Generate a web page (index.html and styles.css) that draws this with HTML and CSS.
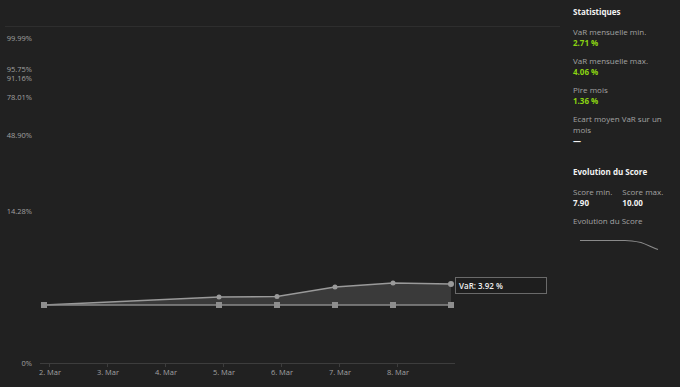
FILE: index.html
```html
<!DOCTYPE html>
<html lang="fr">
<head>
<meta charset="utf-8">
<link rel="stylesheet" href="styles.css">
</head>
<body>
<div class="page">
  <div class="chart">
    <svg class="chart-svg" width="560" height="387" viewBox="0 0 560 387">
      <line x1="5" y1="26.5" x2="560" y2="26.5" stroke="#2e2e2e" stroke-width="1"/>
      <g class="ylab" text-anchor="end">
        <text x="32" y="41">99.99%</text>
        <text x="32" y="72">95.75%</text>
        <text x="32" y="81">91.16%</text>
        <text x="32" y="100">78.01%</text>
        <text x="32" y="138">48.90%</text>
        <text x="32" y="214">14.28%</text>
        <text x="32" y="366">0%</text>
      </g>
      <line x1="40" y1="363.5" x2="455" y2="363.5" stroke="#3d3d3d"/>
      <g stroke="#3d3d3d">
        <line x1="49.5" y1="363" x2="49.5" y2="367"/>
        <line x1="107.5" y1="363" x2="107.5" y2="367"/>
        <line x1="165.5" y1="363" x2="165.5" y2="367"/>
        <line x1="223.5" y1="363" x2="223.5" y2="367"/>
        <line x1="281.5" y1="363" x2="281.5" y2="367"/>
        <line x1="339.5" y1="363" x2="339.5" y2="367"/>
        <line x1="397.5" y1="363" x2="397.5" y2="367"/>
      </g>
      <g class="xlab" text-anchor="middle">
        <text x="50" y="375">2. Mar</text>
        <text x="108" y="375">3. Mar</text>
        <text x="166" y="375">4. Mar</text>
        <text x="224" y="375">5. Mar</text>
        <text x="282" y="375">6. Mar</text>
        <text x="340" y="375">7. Mar</text>
        <text x="398" y="375">8. Mar</text>
      </g>
      <polygon points="44,305 219,297 277,296.5 335,287 393,283 451,284 451,305" fill="#3a3a3a"/>
      <polyline points="44,305 219,297 277,296.5 335,287 393,283 451,284" fill="none" stroke="#9a9a9a" stroke-width="1.5"/>
      <line x1="44" y1="305" x2="451" y2="305" stroke="#8a8a8a" stroke-width="1.5"/>
      <g fill="#9a9a9a">
        <circle cx="219" cy="297" r="2.5"/>
        <circle cx="277" cy="296.5" r="2.5"/>
        <circle cx="335" cy="287" r="2.5"/>
        <circle cx="393" cy="283" r="2.5"/>
        <circle cx="451" cy="284" r="3"/>
      </g>
      <g fill="#8e8e8e">
        <rect x="41" y="302" width="6" height="6"/>
        <rect x="216" y="302" width="6" height="6"/>
        <rect x="274" y="302" width="6" height="6"/>
        <rect x="332" y="302" width="6" height="6"/>
        <rect x="390" y="302" width="6" height="6"/>
        <rect x="448" y="302" width="6" height="6"/>
      </g>
    </svg>
    <div class="tooltip">VaR: 3.92 %</div>
  </div>
  <aside class="side">
    <h2 class="title">Statistiques</h2>
    <div class="stat">
      <div class="label">VaR mensuelle min.</div>
      <div class="value green">2.71 %</div>
    </div>
    <div class="stat">
      <div class="label">VaR mensuelle max.</div>
      <div class="value green">4.06 %</div>
    </div>
    <div class="stat">
      <div class="label">Pire mois</div>
      <div class="value green">1.36 %</div>
    </div>
    <div class="stat">
      <div class="label">Ecart moyen VaR sur un mois</div>
      <div class="value white">—</div>
    </div>
    <h2 class="title title-2">Evolution du Score</h2>
    <div class="scores">
      <div class="score">
        <div class="label">Score min.</div>
        <div class="value white">7.90</div>
      </div>
      <div class="score">
        <div class="label">Score max.</div>
        <div class="value white">10.00</div>
      </div>
    </div>
    <div class="label spark-label">Evolution du Score</div>
    <svg class="spark" width="90" height="14" viewBox="0 0 90 14">
      <path d="M7 3.5 L52 3.5 C58 3.5 63 4.5 68 5.5 C74 7.5 79 10.5 85 12.5" fill="none" stroke="#8a8a8a" stroke-width="1.2"/>
    </svg>
  </aside>
</div>
</body>
</html>
```

FILE: styles.css
```css
html, body {
  margin: 0;
  padding: 0;
  background: #212121;
}
body {
  width: 680px;
  height: 387px;
  overflow: hidden;
  font-family: "Open Sans", "Noto Sans", sans-serif;
}
.page {
  display: flex;
  height: 387px;
}
.chart {
  position: relative;
  width: 560px;
  flex: none;
}
.chart-svg {
  display: block;
}
.ylab text, .xlab text {
  font-family: "Open Sans", sans-serif;
  font-size: 7.5px;
  fill: #a0a0a0;
}
.tooltip {
  position: absolute;
  left: 455px;
  top: 277px;
  width: 87px;
  height: 15px;
  border: 1px solid #6a6a6a;
  background: #1e1e1e;
  color: #f0f0f0;
  font-size: 8px;
  font-weight: 600;
  line-height: 15px;
  padding-left: 3px;
  box-sizing: content-box;
}
.side {
  padding: 6px 0 0 13px;
  flex: 1;
  display: flex;
  flex-direction: column;
  align-items: flex-start;
}
.title {
  margin: 0 0 8px;
  font-size: 8px;
  font-weight: 700;
  color: #f2f2f2;
  line-height: 12px;
}
.title-2 {
  margin-top: 13px;
  margin-bottom: 8px;
}
.stat {
  margin-bottom: 7px;
  width: 100px;
}
.label {
  font-size: 8px;
  color: #a3a3a3;
  line-height: 11px;
}
.value {
  font-size: 8px;
  font-weight: 700;
  line-height: 11px;
}
.green { color: #8ad312; }
.white { color: #f2f2f2; }
.scores {
  display: flex;
  gap: 10px;
}
.spark-label {
  margin-top: 7px;
}
.spark {
  display: block;
  margin-top: 11px;
}
```
